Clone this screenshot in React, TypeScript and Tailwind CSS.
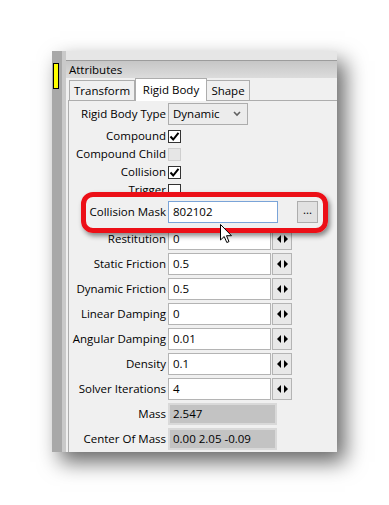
import React from "react";

type Field = {
  label: string;
  kind: "select" | "check" | "mask" | "num" | "readonly";
  value?: string;
  checked?: boolean;
  disabled?: boolean;
};

const checks: Field[] = [
  { label: "Compound", kind: "check", checked: true },
  { label: "Compound Child", kind: "check", disabled: true },
  { label: "Collision", kind: "check", checked: true },
  { label: "Trigger", kind: "check" },
];

const numbers: Field[] = [
  { label: "Restitution", kind: "num", value: "0" },
  { label: "Static Friction", kind: "num", value: "0.5" },
  { label: "Dynamic Friction", kind: "num", value: "0.5" },
  { label: "Linear Damping", kind: "num", value: "0" },
  { label: "Angular Damping", kind: "num", value: "0.01" },
  { label: "Density", kind: "num", value: "0.1" },
  { label: "Solver Iterations", kind: "num", value: "4" },
  { label: "Mass", kind: "readonly", value: "2.547" },
  { label: "Center Of Mass", kind: "readonly", value: "0.00 2.05 -0.09" },
];

function Label({ text }: { text: string }) {
  return <div className="w-[99px] shrink-0 pr-[2px] text-right whitespace-nowrap">{text}</div>;
}

function Spinner() {
  return (
    <div className="ml-[1px] flex h-[22px] w-[20px] items-center justify-center border border-[#b4b4b4] bg-[#e8e8e8]">
      <svg width="11" height="8" viewBox="0 0 11 8">
        <path d="M4 0 L0 4 L4 8 Z" fill="#000" />
        <path d="M7 0 L11 4 L7 8 Z" fill="#000" />
      </svg>
    </div>
  );
}

function CheckBox({ checked, disabled }: { checked?: boolean; disabled?: boolean }) {
  if (disabled) {
    return <div className="h-[13px] w-[13px] border border-[#cfcfcf] bg-[#e6e6e6]" />;
  }
  return (
    <div className="flex h-[13px] w-[13px] items-center justify-center border border-[#333] bg-white">
      {checked && (
        <svg width="11" height="11" viewBox="0 0 11 11">
          <path d="M1.5 5.5 L4.2 8.5 L9.5 1.8" stroke="#000" strokeWidth="2" fill="none" />
        </svg>
      )}
    </div>
  );
}

function NumRow({ f }: { f: Field }) {
  return (
    <div className="mt-[3px] flex h-[22px] items-center">
      <Label text={f.label} />
      {f.kind === "num" ? (
        <>
          <div className="flex h-[22px] w-[103px] items-center border border-[#b4b4b4] bg-white pl-[4px]">{f.value}</div>
          <Spinner />
        </>
      ) : (
        <div className="flex h-[22px] w-[109px] items-center border-2 border-[#d9d9d9] bg-[#c3c3c3] pl-[3px]">{f.value}</div>
      )}
    </div>
  );
}

export default function App() {
  return (
    <div className="relative h-[505px] w-[389px] overflow-hidden bg-white font-['Open_Sans',sans-serif] text-[11.5px] text-black">
      <div className="ml-[52px] mt-[51px] flex h-[401px] w-[285px] shadow-[8px_10px_20px_rgba(0,0,0,0.6)]">
        {/* side strip */}
        <div className="w-[10px] shrink-0 bg-[#a8a8a8] pt-[12px] pl-[1px]">
          <div className="h-[26px] w-[6px] border border-black bg-[#ffff00]" />
        </div>
        <div className="w-[4px] shrink-0 bg-[#c9c9c9]" />
        <div className="flex min-w-0 flex-1 flex-col bg-[#f0f0f0]">
          <div className="h-[9px] bg-[#e6e6e6]" />
          <div className="flex h-[18px] items-center border-t border-[#9c9c9c] bg-gradient-to-b from-[#c6c6c6] to-[#dcdcdc] pl-[3px]">
            Attributes
          </div>
          {/* tabs */}
          <div className="flex h-[22px] items-end pl-[3px]">
            <div className="flex h-[20px] w-[66px] items-center justify-center border border-b-0 border-[#adadad] bg-[#f0f0f0]">
              Transform
            </div>
            <div className="relative z-10 -mb-[1px] flex h-[23px] w-[72px] items-center justify-center border border-b-0 border-[#adadad] bg-white">
              Rigid Body
            </div>
            <div className="flex h-[20px] w-[43px] items-center justify-center border border-b-0 border-l-0 border-[#adadad] bg-[#f0f0f0]">
              Shape
            </div>
          </div>
          {/* content */}
          <div className="ml-[2px] flex flex-1 flex-col border-l border-t border-[#adadad] pt-[2px]">
            <div className="flex h-[22px] items-center">
              <Label text="Rigid Body Type" />
              <div className="flex h-[22px] w-[80px] items-center justify-between border border-[#adadad] bg-[#ececec] pl-[4px] pr-[6px]">
                <span>Dynamic</span>
                <svg width="8" height="6" viewBox="0 0 8 6">
                  <path d="M1 1 L4 4 L7 1" stroke="#606060" strokeWidth="1.6" fill="none" />
                </svg>
              </div>
            </div>
            <div className="mt-[2px] flex flex-col">
              {checks.map((c) => (
                <div key={c.label} className="flex h-[18px] items-center">
                  <Label text={c.label} />
                  <CheckBox checked={c.checked} disabled={c.disabled} />
                </div>
              ))}
            </div>
            <div className="mt-[2px] flex h-[22px] items-center">
              <Label text="Collision Mask" />
              <div className="flex h-[22px] w-[110px] items-center border border-[#7aa4d8] bg-white pl-[4px]">802102</div>
              <div className="ml-[19px] flex h-[22px] w-[21px] items-center justify-center border border-[#adadad] bg-[#e1e1e1] pb-[4px]">
                ...
              </div>
            </div>
            <div className="mt-[2px]">
              {numbers.map((f) => (
                <NumRow key={f.label} f={f} />
              ))}
            </div>
          </div>
        </div>
      </div>

      {/* red annotation box */}
      <div className="absolute left-[81px] top-[192px] h-[41px] w-[247px] rounded-[12px] border-[5px] border-[#ec0f17] shadow-[2px_3px_5px_rgba(0,0,0,0.45)]" />

      {/* mouse cursor */}
      <svg className="absolute left-[220px] top-[224px]" width="13" height="20" viewBox="0 0 13 20">
        <path d="M0.5 0.5 L0.5 16 L4.2 12.5 L6.8 18.5 L9 17.6 L6.5 11.7 L11.5 11.7 Z" fill="#fff" stroke="#000" strokeWidth="1" strokeLinejoin="round" />
      </svg>
    </div>
  );
}
